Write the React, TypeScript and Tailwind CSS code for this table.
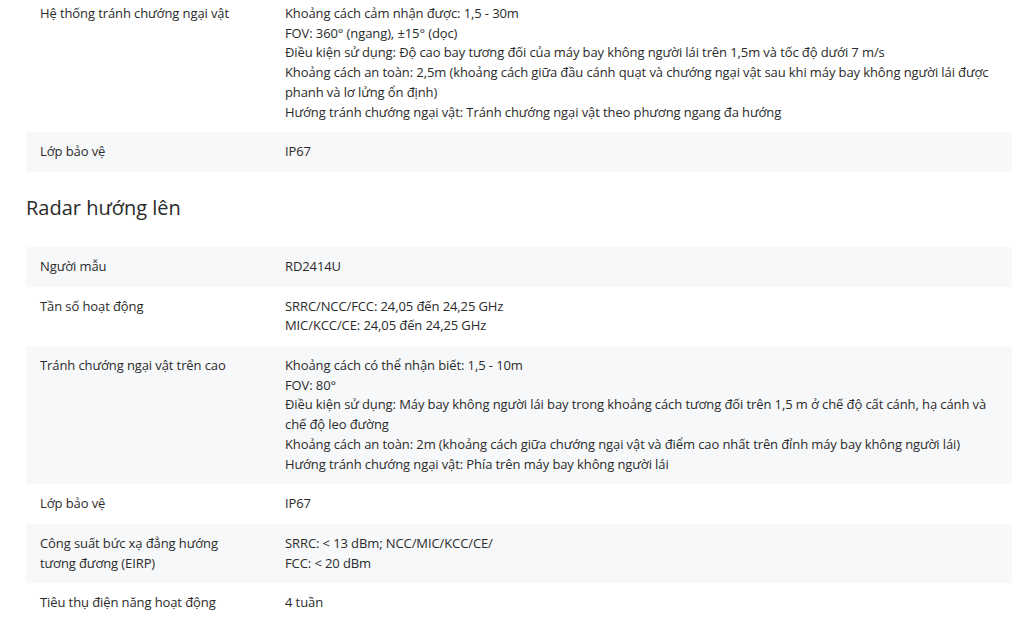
import React from 'react';

type Row = { label: string[]; value: string[] };

const OBSTACLE_ROWS: Row[] = [
  {
    label: ['Hệ thống tránh chướng ngại vật'],
    value: [
      'Khoảng cách cảm nhận được: 1,5 - 30m',
      'FOV: 360° (ngang), ±15° (dọc)',
      'Điều kiện sử dụng: Độ cao bay tương đối của máy bay không người lái trên 1,5m và tốc độ dưới 7 m/s',
      'Khoảng cách an toàn: 2,5m (khoảng cách giữa đầu cánh quạt và chướng ngại vật sau khi máy bay không người lái được phanh và lơ lửng ổn định)',
      'Hướng tránh chướng ngại vật: Tránh chướng ngại vật theo phương ngang đa hướng',
    ],
  },
  { label: ['Lớp bảo vệ'], value: ['IP67'] },
];

const RADAR_ROWS: Row[] = [
  { label: ['Người mẫu'], value: ['RD2414U'] },
  {
    label: ['Tần số hoạt động'],
    value: ['SRRC/NCC/FCC: 24,05 đến 24,25 GHz', 'MIC/KCC/CE: 24,05 đến 24,25 GHz'],
  },
  {
    label: ['Tránh chướng ngại vật trên cao'],
    value: [
      'Khoảng cách có thể nhận biết: 1,5 - 10m',
      'FOV: 80°',
      'Điều kiện sử dụng: Máy bay không người lái bay trong khoảng cách tương đối trên 1,5 m ở chế độ cất cánh, hạ cánh và chế độ leo đường',
      'Khoảng cách an toàn: 2m (khoảng cách giữa chướng ngại vật và điểm cao nhất trên đỉnh máy bay không người lái)',
      'Hướng tránh chướng ngại vật: Phía trên máy bay không người lái',
    ],
  },
  { label: ['Lớp bảo vệ'], value: ['IP67'] },
  {
    label: ['Công suất bức xạ đẳng hướng', 'tương đương (EIRP)'],
    value: ['SRRC: < 13 dBm; NCC/MIC/KCC/CE/', 'FCC: < 20 dBm'],
  },
  { label: ['Tiêu thụ điện năng hoạt động'], value: ['4 tuần'] },
];

function SpecTable({ rows, stripeFirst }: { rows: Row[]; stripeFirst: boolean }) {
  return (
    <div className="w-full">
      {rows.map((row, i) => {
        const gray = stripeFirst ? i % 2 === 0 : i % 2 === 1;
        return (
          <div key={i} className={`flex py-[10px] ${gray ? 'bg-[#f7f8fa]' : 'bg-white'}`}>
            <div className="w-[245px] shrink-0 px-[14px]">
              {row.label.map((l, j) => (
                <div key={j}>{l}</div>
              ))}
            </div>
            <div className="flex-1 pl-[14px] pr-[10px]">
              {row.value.map((v, j) => (
                <div key={j}>{v}</div>
              ))}
            </div>
          </div>
        );
      })}
    </div>
  );
}

export default function App() {
  return (
    <div className="min-h-[627px] bg-white overflow-hidden">
      <div
        className="ml-[26px] w-[986px] -mt-[6px] text-[13px] leading-[19.7px] font-medium tracking-[-0.1px] text-[#2b2b2b]"
        style={{ fontFamily: '"Open Sans", "Noto Sans", sans-serif' }}
      >
        <SpecTable rows={OBSTACLE_ROWS} stripeFirst={false} />
        <h2 className="text-[20px] leading-[28px] font-medium tracking-normal text-[#2b2b2b] mt-[22px] mb-[25px]">Radar hướng lên</h2>
        <SpecTable rows={RADAR_ROWS} stripeFirst={true} />
      </div>
    </div>
  );
}
